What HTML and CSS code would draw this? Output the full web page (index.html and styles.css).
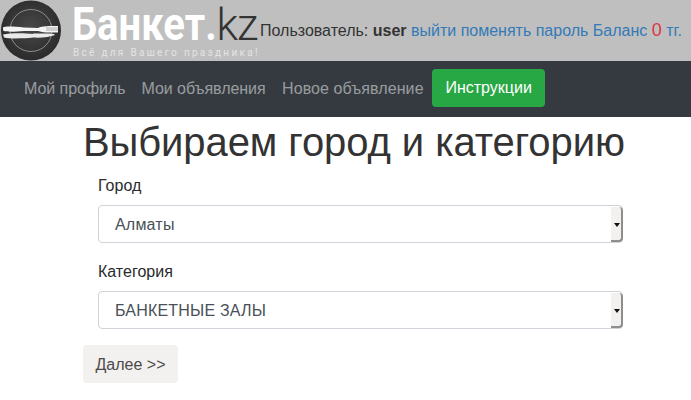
FILE: index.html
```html
<!DOCTYPE html>
<html lang="ru">
<head>
<meta charset="utf-8">
<title>Банкет.kz</title>
<link rel="stylesheet" href="styles.css">
</head>
<body>
<header class="top">
  <a class="logo" href="#">
    <svg class="plate" width="62" height="61" viewBox="0 0 62 61">
      <defs>
        <radialGradient id="pg" cx="50%" cy="45%" r="55%">
          <stop offset="0" stop-color="#484848"/>
          <stop offset="1" stop-color="#2b2b2b"/>
        </radialGradient>
      </defs>
      <circle cx="31" cy="30.500" r="30" fill="url(#pg)"/>
      <circle cx="31" cy="30.500" r="21" fill="none" stroke="#8d8d8d" stroke-width="1"/>
      <path d="M3 27.500 C5 26 14 26.500 24 27.500 L38 28 C41 26.500 44 26 58 26 L58 32.500 L46 32.500 C43 32.500 41 31.500 38 31 L24 31 C14 32 5 32 3 30.500 Z" fill="#f4f4f4"/>
      <path d="M46 28h12M46 30h12" stroke="#9a9a9a" stroke-width=".8"/>
      <path d="M3 34.500 C10 33 24 33 33 34 L33 33.500 L50 33.500 C53 33.500 55 34.500 55 35 C50 37 42 38 33 37.500 C24 38.500 10 39 4 37.500 Z" fill="#eaeaea"/>
    </svg>
    <span class="brand">
      <span class="brand-name"><span class="brand-bold">Банкет.</span><span class="brand-kz">kz</span></span>
      <span class="brand-sub">Всё для Вашего праздника!</span>
    </span>
  </a>
  <p class="user">Пользователь: <b>user</b> <a href="#">выйти</a> <a href="#">поменять пароль</a> <a href="#">Баланс</a> <span class="zero">0</span> <a href="#">тг.</a></p>
</header>
<nav class="nav">
  <a class="nav-link" href="#">Мой профиль</a>
  <a class="nav-link" href="#">Мои объявления</a>
  <a class="nav-link nav-link-wide" href="#">Новое объявление</a>
  <a class="nav-btn" href="#">Инструкции</a>
</nav>
<main class="main">
  <h1 class="title">Выбираем город и категорию</h1>
  <form class="form">
    <div class="group">
      <label class="label" for="city">Город</label>
      <div class="select-wrap">
        <select class="select" id="city"><option>Алматы</option></select>
        <span class="spin"></span>
      </div>
    </div>
    <div class="group">
      <label class="label" for="cat">Категория</label>
      <div class="select-wrap">
        <select class="select" id="cat"><option>БАНКЕТНЫЕ ЗАЛЫ</option></select>
        <span class="spin"></span>
      </div>
    </div>
    <button class="next" type="button">Далее &gt;&gt;</button>
  </form>
</main>
</body>
</html>
```
FILE: styles.css
```css
* { box-sizing: border-box; }
html, body { margin: 0; padding: 0; }
body {
  font-family: "Liberation Sans", Arial, sans-serif;
  font-size: 16px;
  line-height: 24px;
  color: #212529;
  background: #fff;
}
a { color: #337ab7; text-decoration: none; }

.top {
  height: 61px;
  background: #bfbfbf;
  display: flex;
  align-items: flex-start;
}
.logo { display: flex; flex: none; width: 260px; color: #fff; }
.plate { flex: none; }
.brand { display: flex; flex-direction: column; margin-left: 10px; width: 188px; }
.brand-name { display: block; height: 46px; font-family: Roboto, sans-serif; font-size: 46px; line-height: 42px; white-space: nowrap; padding-top: 3px; }
.brand-bold { display: inline-block; font-weight: 700; transform: scaleX(.87); transform-origin: left center; margin-right: -22px; }
.brand-kz { color: #333; font-weight: 300; font-size: 44px; letter-spacing: -1px; }
.brand-sub { font-family: Roboto, sans-serif; font-size: 10px; line-height: 13px; letter-spacing: 2.3px; margin-left: 1px; color: #e4e4e4; white-space: nowrap; }
.user { margin: 18px 0 0; white-space: nowrap; color: #333; }
.zero { color: #dc3545; font-size: 18px; }

.nav {
  height: 56px;
  background: #343a40;
  display: flex;
  align-items: center;
  padding-left: 16px;
}
.nav-link { color: rgba(255,255,255,.5); padding: 0 8px; letter-spacing: -.05px; }
.nav-link-wide { letter-spacing: .08px; margin-left: .5px; }
.nav-btn {
  margin-left: .5px;
  margin-top: -2px;
  padding: 7px 0;
  width: 113px;
  height: 38px;
  text-align: center;
  background: #28a745;
  color: #fff;
  border-radius: 4px;
}

.main { width: 555px; margin-left: 83px; }
.title { margin: 1px 0 8px; font-size: 40px; line-height: 48px; font-weight: 400; letter-spacing: -.08px; color: #333; white-space: nowrap; }
.form { display: flex; flex-direction: column; align-items: flex-start; }
.group { width: 100%; padding: 0 15px; margin-bottom: 16px; }
.group + .group { margin-top: 1px; }
.label { display: block; margin-bottom: 7px; line-height: 24px; color: #292b2c; }
.select-wrap { position: relative; height: 38px; }
.select {
  display: block;
  width: 100%;
  height: 38px;
  padding: 7px 16px 5px;
  font: inherit;
  letter-spacing: .2px;
  color: #495057;
  background: #fff;
  border: 1px solid #ced4da;
  border-radius: 4px;
  appearance: none;
  -webkit-appearance: none;
}
.spin {
  position: absolute;
  top: 2px;
  right: 0;
  bottom: 1px;
  width: 12px;
  background: #f2f1f0;
  border-right: 2px solid #8e8e8e;
  border-bottom: 2px solid #8e8e8e;
  border-radius: 0 4px 4px 0;
}
.spin::after {
  content: "";
  position: absolute;
  left: 3px;
  top: 16px;
  border: 3px solid transparent;
  border-top: 4px solid #111;
  border-bottom: 0;
}
.next {
  height: 38px;
  width: 95px;
  padding: 2px 0 0;
  font: inherit;
  color: #4a4a4a;
  background: #f2f1ef;
  border: 0;
  border-radius: 4px;
}
```
